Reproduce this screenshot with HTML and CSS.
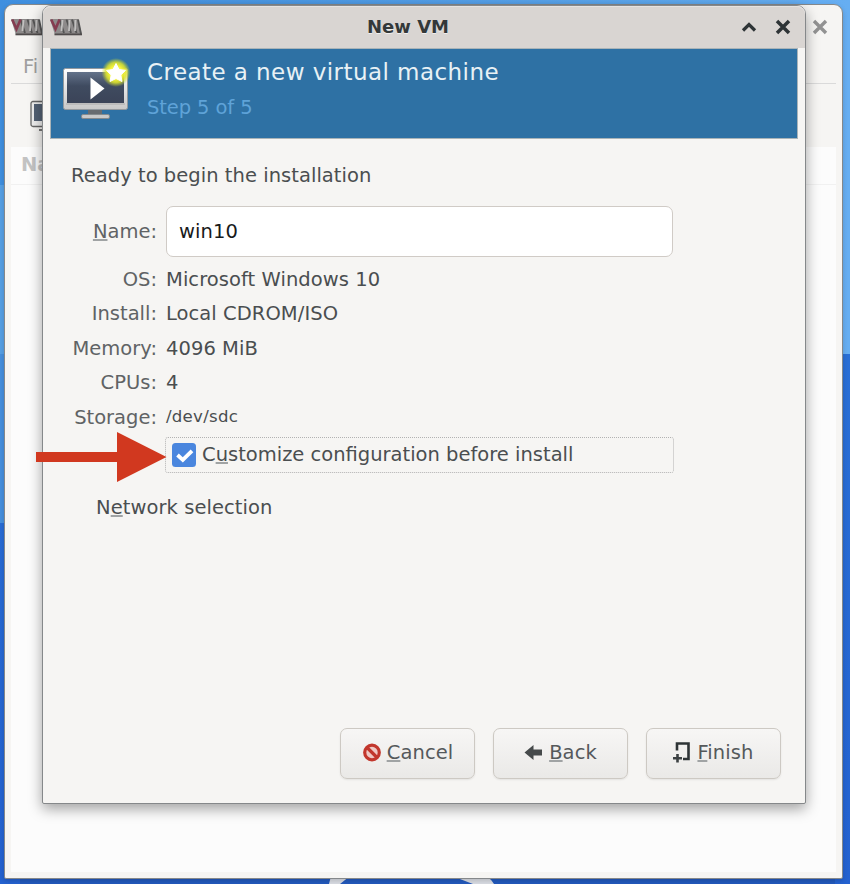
FILE: index.html
```html
<!DOCTYPE html>
<html lang="en">
<head>
<meta charset="utf-8">
<title>New VM</title>
<link rel="stylesheet" href="styles.css">
</head>
<body>
<div class="desktop">
  <svg class="wallpaper" width="850" height="884" viewBox="0 0 850 884" aria-hidden="true">
    <defs>
      <linearGradient id="sky" x1="0" y1="0" x2="1" y2="0"><stop offset="0" stop-color="#3f8fdf"/><stop offset="1" stop-color="#66aef2"/></linearGradient>
      <linearGradient id="sea" x1="0" y1="0" x2="0" y2="1"><stop offset="0" stop-color="#2d78da"/><stop offset="1" stop-color="#2462d0"/></linearGradient>
    </defs>
    <rect width="850" height="884" fill="url(#sea)"/>
    <rect width="850" height="354" fill="url(#sky)"/>
    <path d="M0 185H40V354H0Z" fill="#569fe4"/>
    <path d="M0 354H40V523H0Z" fill="#468fdd"/>
    <path d="M20 876H835V884H20Z" fill="#2259bd"/>
    <path d="M329 884L331 876H350L340 884ZM494 884H473L452 876H486Q491 879 494 884Z" fill="#d9dce3"/>
  </svg>

  <section class="window manager">
    <header class="titlebar">
      <svg class="vmm" width="32" height="18" viewBox="0 0 32 18"><use href="#vmm-logo"/></svg>
      <svg class="close" width="16" height="16" viewBox="0 0 16 16"><path d="M2 2L14 14M14 2L2 14" stroke="#929292" stroke-width="3.4"/></svg>
    </header>
    <nav class="menubar">Fi</nav>
    <div class="toolbar">
      <svg width="44" height="36" viewBox="0 0 44 36"><rect x="2" y="1.500" width="40" height="25" rx="2" fill="#eee" stroke="#666" stroke-width="1.300"/><rect x="5" y="4" width="33" height="17" fill="#536174"/><path d="M10 29h22v2H10z" fill="#777"/></svg>
    </div>
    <div class="list"><div class="list-head">Na</div></div>
  </section>

  <section class="window dialog">
    <header class="titlebar">
      <svg class="vmm" width="32" height="18" viewBox="0 0 32 18">
        <g id="vmm-logo">
          <path d="M0 1H28L32 17H5Z" fill="#8d8a8a"/>
          <path d="M9.500 1.500L14 15M16.500 1.500L21 15M22 1.500L26.500 15M28 1.500L31 16" stroke="#555" stroke-width="1.900"/>
          <path d="M12.500 2L11.500 13M19.500 2L19 13M25.500 2L25 13" stroke="#c2c1c0" stroke-width="1.800"/>
          <path d="M4.500 16.400H32" stroke="#4f4b4b" stroke-width="1.800"/>
          <path d="M1.200 1.500L5.500 11L9.500 1.500" fill="none" stroke="#853c50" stroke-width="2.600"/>
        </g>
      </svg>
      <h1>New VM</h1>
      <svg class="shade" width="16" height="12" viewBox="0 0 16 12"><path d="M2 9.5L8 3.5L14 9.5" fill="none" stroke="#2e3436" stroke-width="3.2"/></svg>
      <svg class="close" width="16" height="16" viewBox="0 0 16 16"><path d="M2 2L14 14M14 2L2 14" stroke="#2e3436" stroke-width="3.500"/></svg>
    </header>

    <div class="banner">
      <svg class="monitor" width="68" height="64" viewBox="0 0 68 64">
        <defs>
          <linearGradient id="screen" x1="0" y1="0" x2="0" y2="1"><stop offset="0" stop-color="#63728a"/><stop offset=".45" stop-color="#3f4b60"/><stop offset="1" stop-color="#3b4458"/></linearGradient>
          <linearGradient id="bezel" x1="0" y1="0" x2="0" y2="1"><stop offset="0" stop-color="#fff"/><stop offset="1" stop-color="#c8c8c8"/></linearGradient>
          <radialGradient id="glow"><stop offset="0" stop-color="#fff"/><stop offset=".45" stop-color="#f4f43c"/><stop offset=".7" stop-color="#dfe52a" stop-opacity=".85"/><stop offset="1" stop-color="#c3d62c" stop-opacity="0"/></radialGradient>
        </defs>
        <path d="M26 51H40V57H26Z" fill="#686c70"/>
        <rect x="1.500" y="10.500" width="64" height="41" rx="2" fill="url(#bezel)" stroke="#93999e"/>
        <rect x="5" y="14" width="57" height="31" fill="url(#screen)"/>
        <path d="M4 46H63" stroke="#aaa"/>
        <rect x="19.500" y="56.500" width="28" height="4" rx="1.500" fill="#c9c9c9" stroke="#858a8d"/>
        <path d="M28.500 19.500V41.500L42.500 30.500Z" fill="#fff"/>
        <circle cx="54" cy="14.500" r="14.500" fill="url(#glow)"/>
        <path d="M54 5.500L57 11.500L63.500 12.400L58.800 17L60 23.500L54 20.500L48 23.500L49.200 17L44.500 12.400L51 11.500Z" fill="#fff" stroke="#fff" stroke-linejoin="round"/>
      </svg>
      <div class="banner-text">
        <h2>Create a new virtual machine</h2>
        <p>Step 5 of 5</p>
      </div>
    </div>

    <main class="page">
      <p class="ready">Ready to begin the installation</p>
      <div class="form">
        <label class="key name-key" for="name"><u>N</u>ame:</label>
        <input id="name" class="entry" type="text" value="win10" spellcheck="false">
        <span class="key">OS:</span><span class="value">Microsoft Windows 10</span>
        <span class="key">Install:</span><span class="value">Local CDROM/ISO</span>
        <span class="key">Memory:</span><span class="value">4096 MiB</span>
        <span class="key">CPUs:</span><span class="value">4</span>
        <span class="key">Storage:</span><span class="value small">/dev/sdc</span>
      </div>
      <div class="customize">
        <svg width="24" height="24" viewBox="0 0 24 24"><rect width="24" height="24" rx="3.500" fill="#4a86de"/><path d="M5.500 12L10.800 16.800L20 7.800" fill="none" stroke="#fff" stroke-width="3.800"/></svg>
        <span>C<u>u</u>stomize configuration before install</span>
      </div>
      <p class="network">N<u>e</u>twork selection</p>
    </main>

    <footer class="actions">
      <button class="btn"><svg width="20" height="20" viewBox="0 0 20 20"><circle cx="10" cy="9.500" r="7.300" fill="#efc9c5" stroke="#c2372d" stroke-width="3.200"/><path d="M5 4.500L15 14.500" stroke="#c2372d" stroke-width="3.200"/></svg><span><u>C</u>ancel</span></button>
      <button class="btn"><svg width="20" height="20" viewBox="0 0 20 20"><path d="M0.500 9.500L9.500 2V6.500H18V12.500H9.500V17Z" fill="#464a4b"/></svg><span><u>B</u>ack</span></button>
      <button class="btn finish"><svg width="20" height="24" viewBox="0 0 20 24"><path d="M4 9.500V2.500H15.500V18H10" fill="none" stroke="#2e3436" stroke-width="2.600"/><path d="M4.500 13V21.500M0 17.200H9" stroke="#3c4143" stroke-width="2.600"/></svg><span><u>F</u>inish</span></button>
    </footer>
  </section>

  <svg class="pointer" width="132" height="52" viewBox="0 0 132 52"><path d="M0 21H81V1L130.500 26L81 51V31H0Z" fill="#d1381f"/></svg>
</div>
</body>
</html>
```
FILE: styles.css
```css
* { box-sizing: border-box; }
body { margin: 0; font: 19.5px/24px "DejaVu Sans", sans-serif; color: #4a4e50; }
h1, h2, p { margin: 0; font-weight: normal; }
u { text-decoration: underline; text-decoration-thickness: 1.5px; text-underline-offset: 0.5px; text-decoration-color: #a0a3a4; text-decoration-skip-ink: none; }

.desktop { position: relative; width: 850px; height: 884px; overflow: hidden; }
.wallpaper { position: absolute; inset: 0; }
.window { position: absolute; display: flex; flex-direction: column; background: #f6f5f3; }
.titlebar { display: flex; align-items: center; flex: none; }

.manager { left: 4px; top: 4px; width: 839px; height: 875px; border: 1.5px solid #85888a; border-radius: 9px 9px 2px 2px; padding: 0 6px 6px; box-shadow: 0 2px 5px rgba(0, 0, 0, .16); color: #aaa; }
.manager .titlebar { height: 43px; justify-content: space-between; padding-right: 8px; }
.menubar { height: 36px; padding: 7px 0 0 12px; border-bottom: 1.5px solid #dadada; color: #a0a0a0; }
.toolbar { height: 63px; padding: 16px 0 0 18px; }
.list { flex: 1; background: #fcfcfc; }
.list-head { height: 38px; padding: 6px 0 0 10px; border-bottom: 1px solid #f1f1f1; font-weight: bold; color: #c3c3c3; }

.dialog { left: 42px; top: 5px; width: 764px; height: 799px; border: 1.5px solid #85888a; border-radius: 9px 9px 2px 2px; box-shadow: 0 5px 14px rgba(0, 0, 0, .36); }
.dialog .titlebar { height: 42px; padding: 0 14px 0 7px; background: #d9d5d2; border-radius: 8px 8px 0 0; box-shadow: inset 0 1px #e6e3e1; }
.titlebar h1 { flex: 1; padding-left: 285px; font: bold 18px/24px "DejaVu Sans", sans-serif; color: #333839; text-shadow: 0 1px #f0efee; }
.shade { margin-right: 18px; }

.banner { display: flex; flex: none; height: 91px; margin: 0 7px; padding: 9px 0 0 11px; background: #2e71a4; border: 1px solid #aab4b8; }
.banner-text { padding: 0 0 0 17px; }
.banner h2 { font-size: 23px; line-height: 28px; letter-spacing: .44px; color: #e8f1f5; }
.banner p { margin-top: 10px; letter-spacing: -.1px; color: #5fa3d8; }

.page { flex: 1; padding: 25px 0 0 28px; }
.ready { letter-spacing: .04px; }
.form { display: grid; grid-template-columns: 86px 507px; column-gap: 9px; row-gap: 10.500px; margin-top: 18px; }
.key { text-align: right; color: #606365; white-space: nowrap; }
.name-key { align-self: center; }
.value { white-space: nowrap; letter-spacing: .06px; }
.small { font-size: 16.600px; line-height: 22px; letter-spacing: .25px; }
.entry { width: 507px; height: 51px; border: 1.5px solid #d0cbc6; border-radius: 7px; padding: 0 12px 1px; background: #fff; font: inherit; letter-spacing: .1px; color: #181a1b; outline: none; }
.customize { display: flex; align-items: center; gap: 6px; width: 509px; height: 36px; margin: 7px 0 0 94px; padding: 1px 6px 0; border: 1.5px dotted #b2b2b2; border-radius: 3px; white-space: nowrap; }
.network { margin: 23px 0 0 25px; letter-spacing: .07px; }

.actions { display: flex; justify-content: flex-end; gap: 18px; padding: 0 24px 24px 0; }
.btn { display: flex; align-items: center; justify-content: center; gap: 5px; width: 135px; height: 51px; padding: 0 0 1px; border: 1.5px solid #cdc9c3; border-radius: 7px; background: linear-gradient(#f7f6f5, #eae9e7); box-shadow: 0 1px 2px rgba(0, 0, 0, .08); font: inherit; letter-spacing: .1px; color: #55595b; }
.finish { gap: 4px; }
.pointer { position: absolute; left: 36px; top: 431px; }
```
